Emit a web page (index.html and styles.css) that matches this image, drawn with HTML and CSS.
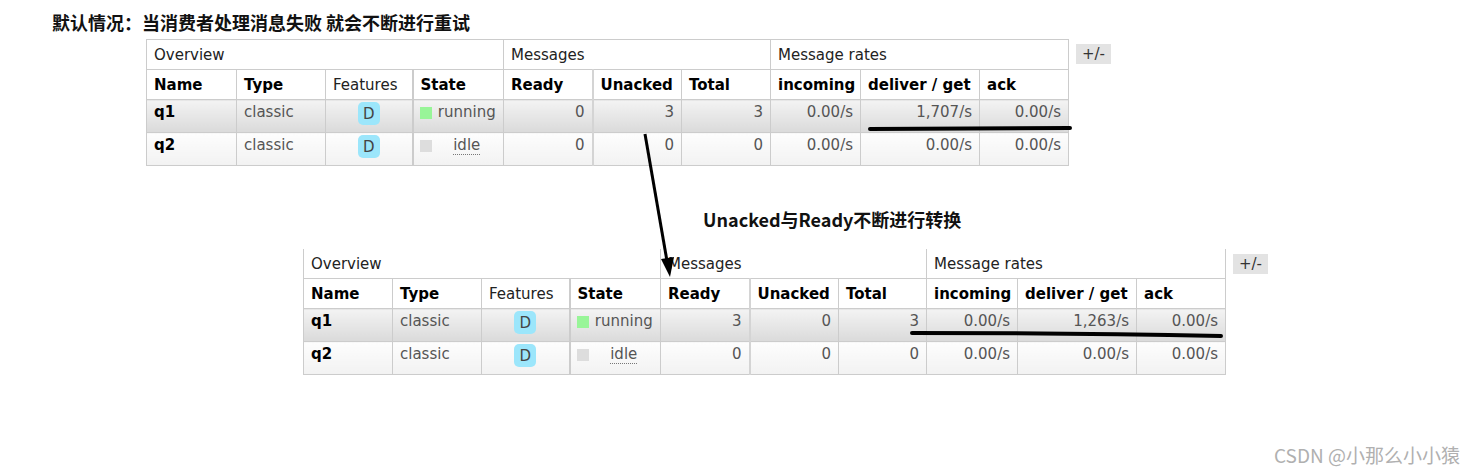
FILE: index.html
```html
<!DOCTYPE html>
<html lang="zh-CN">
  <head>
    <meta charset="UTF-8" />
    <title>Unacked</title>
    <link rel="stylesheet" href="styles.css">
  </head>

  <body>
    <div class="page">
      <h3 class="title">默认情况：当消费者处理消息失败 就会不断进行重试</h3>

      <div class="queues first">
        <table class="list">
          <colgroup>
            <col style="width: 90px" /><col style="width: 89px" /><col style="width: 87px" />
            <col style="width: 91px" /><col style="width: 89px" /><col style="width: 89px" />
            <col style="width: 89px" /><col style="width: 90px" /><col style="width: 119px" />
            <col style="width: 89px" />
          </colgroup>
          <thead>
            <tr class="group">
              <th colspan="4">Overview</th>
              <th colspan="3">Messages</th>
              <th colspan="3">Message rates</th>
            </tr>
            <tr class="cols">
              <th>Name</th>
              <th>Type</th>
              <th class="plain">Features</th>
              <th class="sep">State</th>
              <th>Ready</th>
              <th class="sep2">Unacked</th>
              <th>Total</th>
              <th>incoming</th>
              <th>deliver / get</th>
              <th>ack</th>
            </tr>
          </thead>
          <tbody>
            <tr class="alt1">
              <td class="name">q1</td>
              <td>classic</td>
              <td class="c"><span class="feat">D</span></td>
              <td class="sep state"><span class="dot green"></span>running</td>
              <td class="r">0</td>
              <td class="r sep2">3</td>
              <td class="r">3</td>
              <td class="r">0.00/s</td>
              <td class="r">1,707/s</td>
              <td class="r">0.00/s</td>
            </tr>
            <tr class="alt2">
              <td class="name">q2</td>
              <td>classic</td>
              <td class="c"><span class="feat">D</span></td>
              <td class="sep state"><span class="dot grey"></span><abbr>idle</abbr></td>
              <td class="r">0</td>
              <td class="r sep2">0</td>
              <td class="r">0</td>
              <td class="r">0.00/s</td>
              <td class="r">0.00/s</td>
              <td class="r">0.00/s</td>
            </tr>
          </tbody>
        </table>
        <span class="toggle">+/-</span>
      </div>

      <p class="note">Unacked与Ready不断进行转换</p>

      <div class="queues second">
        <table class="list cut">
          <colgroup>
            <col style="width: 89px" /><col style="width: 89px" /><col style="width: 88px" />
            <col style="width: 91px" /><col style="width: 89px" /><col style="width: 89px" />
            <col style="width: 88px" /><col style="width: 91px" /><col style="width: 119px" />
            <col style="width: 89px" />
          </colgroup>
          <thead>
            <tr class="group">
              <th colspan="4">Overview</th>
              <th colspan="3">Messages</th>
              <th colspan="3">Message rates</th>
            </tr>
            <tr class="cols">
              <th>Name</th>
              <th>Type</th>
              <th class="plain">Features</th>
              <th class="sep">State</th>
              <th>Ready</th>
              <th class="sep2">Unacked</th>
              <th>Total</th>
              <th>incoming</th>
              <th>deliver / get</th>
              <th>ack</th>
            </tr>
          </thead>
          <tbody>
            <tr class="alt1">
              <td class="name">q1</td>
              <td>classic</td>
              <td class="c"><span class="feat">D</span></td>
              <td class="sep state"><span class="dot green"></span>running</td>
              <td class="r">3</td>
              <td class="r sep2">0</td>
              <td class="r">3</td>
              <td class="r">0.00/s</td>
              <td class="r">1,263/s</td>
              <td class="r">0.00/s</td>
            </tr>
            <tr class="alt2">
              <td class="name">q2</td>
              <td>classic</td>
              <td class="c"><span class="feat">D</span></td>
              <td class="sep state"><span class="dot grey"></span><abbr>idle</abbr></td>
              <td class="r">0</td>
              <td class="r sep2">0</td>
              <td class="r">0</td>
              <td class="r">0.00/s</td>
              <td class="r">0.00/s</td>
              <td class="r">0.00/s</td>
            </tr>
          </tbody>
        </table>
        <span class="toggle">+/-</span>
      </div>

      <!-- hand drawn marks over the screenshot -->
      <svg class="marks" width="1476" height="471" viewBox="0 0 1476 471">
        <line x1="645" y1="134" x2="667" y2="261" stroke="#000" stroke-width="3" />
        <polygon points="670,277 661,259 674,257" fill="#000" />
        <path d="M870 129 L1070 128" stroke="#000" stroke-width="4" stroke-linecap="round" fill="none" />
        <path d="M912 333 Q1060 333 1221 336" stroke="#000" stroke-width="4" stroke-linecap="round" fill="none" />
      </svg>

      <span class="watermark">CSDN @小那么小小猿</span>
    </div>
  </body>
</html>
```

FILE: styles.css
```css
* {
  margin: 0;
  padding: 0;
}

body {
  background: #fff;
  font-family: "DejaVu Sans", Verdana, sans-serif;
}

.page {
  position: relative;
  width: 1476px;
  height: 471px;
  overflow: hidden;
}

.title {
  padding: 10px 0 0 52px;
  font-family: "Noto Sans CJK SC", sans-serif;
  font-size: 18px;
  font-weight: bold;
  line-height: 24px;
  color: #111;
}

.queues {
  display: flex;
  align-items: flex-start;
  gap: 7px;
}

.first {
  margin: 5px 0 0 146px;
}

.second {
  margin: 18px 0 0 303px;
}

.note {
  margin: 41px 0 0 703px;
  font-family: "Noto Sans CJK SC", sans-serif;
  font-size: 18px;
  font-weight: bold;
  line-height: 24px;
  color: #111;
}

table.list {
  width: 922px;
  table-layout: fixed;
  border-collapse: collapse;
  font-size: 15px;
  line-height: 20px;
}

.list th,
.list td {
  border: 1px solid #ccc;
  padding: 5px 7px 4px;
  text-align: left;
  white-space: nowrap;
  overflow: hidden;
}

.list .group th {
  font-weight: normal;
  color: #222;
}

.list .cols th {
  font-weight: bold;
  color: #000;
}

.list .cols th.plain {
  font-weight: normal;
  color: #222;
}

.list td {
  height: 20px;
  padding: 2px 7px 10px;
  color: #555;
  vertical-align: top;
}

.list .sep {
  border-left: 2px solid #ccc;
}

.list .sep2 {
  border-left: 2px solid #d4d4d4;
}

.list td.c,
.list td.state {
  text-align: center;
}

.list td.r {
  text-align: right;
}

.list td.name {
  font-weight: bold;
  color: #000;
}

.alt1 td {
  background: linear-gradient(#f3f3f3, #dadada);
}

.alt2 td {
  background: linear-gradient(#fdfdfd, #f2f2f2);
}

.cut thead tr.group th {
  border-top: none;
}

.feat {
  display: inline-block;
  vertical-align: top;
  margin-bottom: -3px;
  padding: 2px 5px 1px;
  line-height: 20px;
  border-radius: 5px;
  background: #9ce6fb;
  color: #444;
}

.dot {
  float: left;
  width: 12px;
  height: 12px;
  margin: 5px 6px 0 -1px;
}

.green {
  background: #98f598;
}

.grey {
  background: #ddd;
}

abbr {
  text-decoration: none;
  border-bottom: 1px dotted #777;
}

.toggle {
  margin-top: 5px;
  width: 35px;
  height: 20px;
  line-height: 20px;
  text-align: center;
  background: #e3e3e3;
  font-size: 15px;
  color: #333;
}

.marks {
  position: absolute;
  left: 0;
  top: 0;
  pointer-events: none;
}

.watermark {
  position: absolute;
  right: 16px;
  top: 443px;
  font-family: "Noto Sans CJK SC", sans-serif;
  font-size: 19px;
  line-height: 24px;
  color: #b0b0b0;
}
```
